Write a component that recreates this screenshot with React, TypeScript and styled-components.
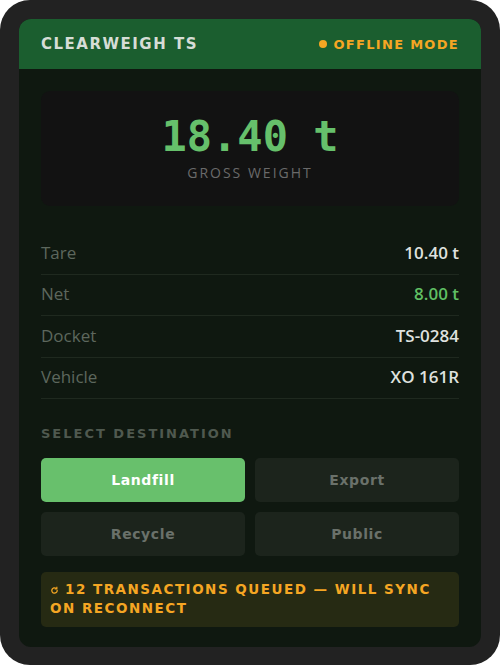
import React from 'react';
import styled, { createGlobalStyle } from 'styled-components';

const GlobalStyle = createGlobalStyle`
  html, body {
    margin: 0;
    padding: 0;
    background: #ffffff;
  }
  * {
    box-sizing: border-box;
  }
`;

const HEAD_FONT = `'DejaVu Sans', 'Inter', sans-serif`;
const BODY_FONT = `'Open Sans', 'Noto Sans', sans-serif`;

const rows = [
  { label: 'Tare', value: '10.40 t' },
  { label: 'Net', value: '8.00 t', accent: true },
  { label: 'Docket', value: 'TS-0284' },
  { label: 'Vehicle', value: 'XO 161R' },
];

const destinations = ['Landfill', 'Export', 'Recycle', 'Public'];

const SyncIcon = () => (
  <QueueIcon viewBox="0 0 10 10" width="9" height="9">
    <path
      d="M8 5a3 3 0 1 1-1.2-2.4"
      fill="none"
      stroke="currentColor"
      strokeWidth="1.4"
      strokeLinecap="round"
    />
    <path d="M7.6 0.8v2.4H5.2" fill="none" stroke="currentColor" strokeWidth="1.3" />
  </QueueIcon>
);

export default function App() {
  return (
    <>
      <GlobalStyle />
      <Frame>
        <Card>
          <Header>
            <Brand>CLEARWEIGH TS</Brand>
            <Status>
              <Dot />
              OFFLINE MODE
            </Status>
          </Header>

          <Body>
            <GrossBox>
              <GrossValue>18.40 t</GrossValue>
              <GrossLabel>GROSS WEIGHT</GrossLabel>
            </GrossBox>

            <Rows>
              {rows.map((r) => (
                <Row key={r.label}>
                  <RowLabel>{r.label}</RowLabel>
                  <RowValue $accent={r.accent}>{r.value}</RowValue>
                </Row>
              ))}
            </Rows>

            <SectionTitle>SELECT DESTINATION</SectionTitle>
            <DestGrid>
              {destinations.map((d, i) => (
                <DestButton key={d} $active={i === 0}>
                  {d}
                </DestButton>
              ))}
            </DestGrid>

            <QueueNotice>
              <SyncIcon />
              12 TRANSACTIONS QUEUED — WILL SYNC ON RECONNECT
            </QueueNotice>
          </Body>
        </Card>
      </Frame>
    </>
  );
}

const Frame = styled.div`
  width: 500px;
  height: 665px;
  padding: 19px;
  background: #222222;
  border-radius: 30px;
`;

const Card = styled.div`
  height: 628px;
  border-radius: 12px;
  overflow: hidden;
  background: #0f1810;
  display: flex;
  flex-direction: column;
`;

const Header = styled.header`
  flex-shrink: 0;
  height: 50px;
  padding: 0 22px;
  background: #1b5e2f;
  display: flex;
  align-items: center;
  justify-content: space-between;
`;

const Brand = styled.span`
  font-family: ${HEAD_FONT};
  font-weight: 700;
  font-size: 15px;
  letter-spacing: 1.5px;
  color: #d6ddd6;
`;

const Status = styled.span`
  display: flex;
  align-items: center;
  gap: 7px;
  font-family: ${HEAD_FONT};
  font-weight: 700;
  font-size: 13px;
  letter-spacing: 1.3px;
  color: #f5a623;
`;

const Dot = styled.span`
  width: 8px;
  height: 8px;
  border-radius: 50%;
  background: #f5a623;
`;

const Body = styled.div`
  padding: 22px 22px 21px;
  display: flex;
  flex-direction: column;
`;

const GrossBox = styled.div`
  height: 115px;
  border-radius: 9px;
  background: #121212;
  display: flex;
  flex-direction: column;
  align-items: center;
  padding-top: 22px;
`;

const GrossValue = styled.div`
  font-family: 'DejaVu Sans Mono', monospace;
  font-weight: 700;
  font-size: 42px;
  line-height: 48px;
  color: #66c06b;
`;

const GrossLabel = styled.div`
  margin-top: 2px;
  font-family: ${BODY_FONT};
  font-size: 14px;
  letter-spacing: 2px;
  color: #6a6a6a;
`;

const Rows = styled.div`
  margin-top: 27px;
  display: flex;
  flex-direction: column;
`;

const Row = styled.div`
  height: 41.5px;
  display: flex;
  align-items: center;
  justify-content: space-between;
  border-bottom: 1px solid #1f291f;
  padding-bottom: 2px;
`;

const RowLabel = styled.span`
  font-family: ${BODY_FONT};
  font-size: 17px;
  color: #5d675d;
`;

const RowValue = styled.span<{ $accent?: boolean }>`
  font-family: ${BODY_FONT};
  font-weight: 600;
  font-size: 17px;
  color: ${(p) => (p.$accent ? '#5fbf63' : '#dfe1df')};
`;

const SectionTitle = styled.div`
  margin-top: 27px;
  font-family: ${HEAD_FONT};
  font-weight: 700;
  font-size: 13px;
  letter-spacing: 2px;
  color: #4f594f;
`;

const DestGrid = styled.div`
  margin-top: 17px;
  display: grid;
  grid-template-columns: 1fr 1fr;
  gap: 10px;
`;

const DestButton = styled.button<{ $active?: boolean }>`
  height: 44px;
  border: none;
  border-radius: 5px;
  font-family: ${HEAD_FONT};
  font-weight: 700;
  font-size: 14px;
  letter-spacing: 0.6px;
  background: ${(p) => (p.$active ? '#68c06c' : '#1c241c')};
  color: ${(p) => (p.$active ? '#ffffff' : '#6a716a')};
  cursor: pointer;
`;

const QueueNotice = styled.div`
  margin-top: 16px;
  padding: 8px 22px 9px 9px;
  border-radius: 5px;
  background: #262a13;
  font-family: ${HEAD_FONT};
  font-weight: 700;
  font-size: 13.5px;
  line-height: 19px;
  letter-spacing: 1.5px;
  color: #f5a623;
`;

const QueueIcon = styled.svg`
  display: inline-block;
  margin-right: 6px;
  vertical-align: -1px;
`;
